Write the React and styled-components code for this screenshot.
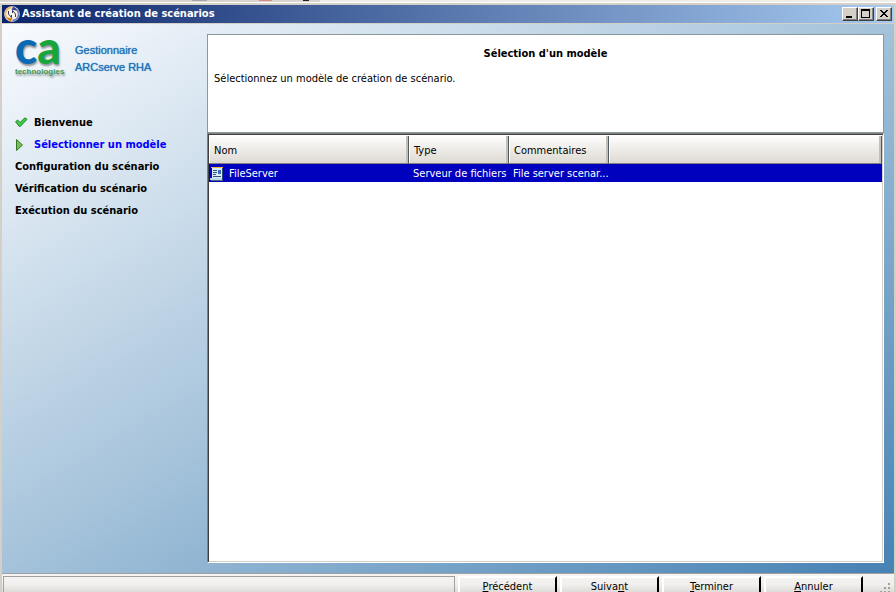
import React, { useState } from "react";
import styled, { createGlobalStyle } from "styled-components";

const steps = [
  { label: "Bienvenue", state: "done" },
  { label: "Sélectionner un modèle", state: "current" },
  { label: "Configuration du scénario", state: "todo" },
  { label: "Vérification du scénario", state: "todo" },
  { label: "Exécution du scénario", state: "todo" },
];

const models = [
  {
    name: "FileServer",
    type: "Serveur de fichiers",
    comment: "File server scenar...",
  },
];

export default function App() {
  const [selected, setSelected] = useState("FileServer");

  return (
    <>
      <GlobalStyle />
      <Page>
        <Backdrop />
        <Window>
          <TitleBar>
            <AppIcon />
            <Title>Assistant de création de scénarios</Title>
            <Caption>
              <CaptionButton type="button" aria-label="Réduire">
                <svg width="13" height="10" shapeRendering="crispEdges">
                  <rect x="2" y="7" width="6" height="2" />
                </svg>
              </CaptionButton>
              <CaptionButton type="button" aria-label="Agrandir">
                <svg width="13" height="10" shapeRendering="crispEdges">
                  <path d="M1 0h9v9h-9z M2 2v6h7v-6z" fillRule="evenodd" />
                </svg>
              </CaptionButton>
              <CaptionButton type="button" aria-label="Fermer" $apart>
                <svg width="13" height="10" shapeRendering="crispEdges">
                  <path d="M2 1h2v1h1v1h2v-1h1v-1h2v1h-1v1h-1v1h-1v1h1v1h1v1h1v1h-2v-1h-1v-1h-2v1h-1v1h-2v-1h1v-1h1v-1h1v-1h-1v-1h-1v-1h-1z" />
                </svg>
              </CaptionButton>
            </Caption>
          </TitleBar>
          <Body>
            <Sidebar>
              <Brand>
                <Logo>
                  <LogoName>
                    <LogoBlue>c</LogoBlue>a
                  </LogoName>
                  <LogoTag>technologies</LogoTag>
                </Logo>
                <Product>
                  Gestionnaire
                  <br />
                  ARCserve RHA
                </Product>
              </Brand>
              <StepList>
                {steps.map(step => (
                  <Step key={step.label} $current={step.state === "current"}>
                    {step.state === "done" && <CheckIcon />}
                    {step.state === "current" && <ArrowIcon />}
                    {step.label}
                  </Step>
                ))}
              </StepList>
            </Sidebar>
            <Main>
              <Intro>
                <Heading>Sélection d'un modèle</Heading>
                <p>Sélectionnez un modèle de création de scénario.</p>
              </Intro>
              <ListBox>
                <Table>
                  <thead>
                    <tr>
                      <HeadCell $width="200px">Nom</HeadCell>
                      <HeadCell $width="100px">Type</HeadCell>
                      <HeadCell $width="100px">Commentaires</HeadCell>
                      <HeadCell aria-label="Vide" />
                    </tr>
                  </thead>
                  <tbody>
                    {models.map(item => (
                      <Row
                        key={item.name}
                        $selected={item.name === selected}
                        onClick={() => setSelected(item.name)}
                      >
                        <Cell $first>
                          <NameBox>
                            <ServerIcon />
                            {item.name}
                          </NameBox>
                        </Cell>
                        <Cell>{item.type}</Cell>
                        <Cell>{item.comment}</Cell>
                        <Cell />
                      </Row>
                    ))}
                  </tbody>
                </Table>
              </ListBox>
            </Main>
          </Body>
          <Footer>
            <StatusBox />
            <FooterButton type="button">
              <u>P</u>récédent
            </FooterButton>
            <FooterButton type="button">
              Suiva<u>n</u>t
            </FooterButton>
            <FooterButton type="button">
              <u>T</u>erminer
            </FooterButton>
            <FooterButton type="button">
              <u>A</u>nnuler
            </FooterButton>
            <GripBox>
              <Grip />
            </GripBox>
          </Footer>
        </Window>
      </Page>
    </>
  );
}

// two arrows chasing each other round a disc
function AppIcon() {
  return (
    <svg width="16" height="16" viewBox="0 0 16 16" aria-hidden="true">
      <circle cx="8" cy="8" r="7.8" fill="#f6f3ee" />
      <path d="M7.500 1.500A6.500 6.500 0 0 0 3 12.200" fill="none" stroke="#f0b66a" strokeWidth="1.800" />
      <path d="M2.500 11.500l6 .5-1.500 3.500C5 15 3.500 13.500 2.500 11.500z" fill="#d98318" />
      <path d="M8.500 14.500A6.500 6.500 0 0 0 13 3.800" fill="none" stroke="#6f7fc0" strokeWidth="1.800" />
      <path d="M13.500 4.500l-6-.5L9 .8c2 .3 3.500 1.700 4.500 3.700z" fill="#39478f" />
      <path d="M4.500 5v3l3 3.500V9M11.500 11V8l-3-3.500V7" fill="none" stroke="#3a3a5a" />
    </svg>
  );
}

function CheckIcon() {
  return (
    <svg width="19" height="12" viewBox="0 0 19 12" aria-hidden="true">
      <path d="M.6 4.800l2-1.800 2.400 2.500L10 .8l2 1.600-7.300 7.500z" fill="#3fd03f" stroke="#1d7f28" />
    </svg>
  );
}

function ArrowIcon() {
  return (
    <svg width="19" height="12" viewBox="0 0 19 12" aria-hidden="true">
      <path d="M1.500 .5v11l6-5.500z" fill="#7cbc58" stroke="#2f7a22" />
    </svg>
  );
}

function ServerIcon() {
  return (
    <svg width="14" height="16" viewBox="0 0 14 16" shapeRendering="crispEdges" aria-hidden="true">
      <rect x="2" y="1" width="11" height="13" fill="#2c4a78" />
      <rect x="2" y="2" width="10" height="10" fill="#d8ecfa" />
      <rect x="1" y="1" width="12" height="1" fill="#f2b840" />
      <path d="M3 4h4v1h-4z M3 6h4v1h-4z M3 8h3v1h-3z M3 10h8v1h-8z" fill="#35507a" />
      <rect x="8" y="4" width="3" height="4" fill="#3d6cb8" />
      <rect x="0" y="12" width="12" height="2" fill="#b9d8ee" />
      <rect x="1" y="14" width="12" height="1" fill="#4b6480" />
    </svg>
  );
}

function Grip() {
  const dots = [[8, 0], [4, 4], [8, 4], [0, 8], [4, 8], [8, 8]];
  return (
    <svg width="11" height="11" shapeRendering="crispEdges" aria-hidden="true">
      {dots.map(([x, y]) => (
        <rect key={`${x}-${y}`} x={x} y={y} width="2" height="2" fill="#a0a0a0" />
      ))}
    </svg>
  );
}

const GlobalStyle = createGlobalStyle`
  * {
    box-sizing: border-box;
  }
  body {
    margin: 0;
    font-family: "DejaVu Sans Condensed", "DejaVu Sans", sans-serif;
    font-size: 11px;
    line-height: 14px;
    color: #000;
  }
  p, h1, h2, ol {
    margin: 0;
    padding: 0;
  }
`;

const Page = styled.div`
  height: 100vh;
  display: flex;
  flex-direction: column;
  overflow: hidden;
  background: #d4d0c8;
`;

// bottom edge of the window that lies behind
const Backdrop = styled.div`
  height: 3px;
  background:
    linear-gradient(#a8a8a8, #a8a8a8) 192px 0 / 15px 1px no-repeat,
    linear-gradient(#d98c80, #d98c80) 259px 0 / 13px 1px no-repeat,
    linear-gradient(#202020, #202020) 303px 0 / 6px 1px no-repeat,
    linear-gradient(to right, #d8d5d0 320px, #efedea 320px);
  border-bottom: 1px solid #fff;
`;

const Window = styled.div`
  flex: 1;
  min-height: 0;
  display: flex;
  flex-direction: column;
  border: 2px solid #d4d0c8;
  border-bottom: 0;
`;

const TitleBar = styled.header`
  display: flex;
  align-items: center;
  gap: 2px;
  height: 18px;
  padding: 0 2px;
  background: linear-gradient(to right, #0a246a, #a6caf0);
`;

const Title = styled.h1`
  flex: 1;
  font-size: 11px;
  font-weight: bold;
  color: #fff;
`;

const Caption = styled.div`
  display: flex;
`;

const CaptionButton = styled.button`
  width: 16px;
  height: 14px;
  margin-left: ${props => (props.$apart ? "2px" : "0")};
  padding: 1px;
  display: flex;
  background: #d4d0c8;
  border: 1px solid;
  border-color: #fff #404040 #404040 #fff;
  box-shadow: inset -1px -1px #808080;
`;

const Body = styled.div`
  flex: 1;
  min-height: 0;
  display: flex;
  margin-top: 1px;
  padding: 10px 10px 10px 0;
  background: linear-gradient(to bottom right, #f9fbfe, #a4c2da 50%, #4682b4);
`;

const Sidebar = styled.nav`
  width: 205px;
  flex-shrink: 0;
  padding-left: 13px;
`;

const Brand = styled.div`
  display: flex;
  gap: 8px;
  height: 78px;
`;

const Logo = styled.div`
  width: 52px;
  text-shadow: 1px 2px 2px #8b9199;
`;

const LogoName = styled.div`
  height: 33px;
  font-family: Lato, sans-serif;
  font-size: 46px;
  font-weight: 900;
  line-height: 26px;
  color: #18a53c;
`;

const LogoBlue = styled.span`
  color: #0a6ab4;
`;

const LogoTag = styled.div`
  font-family: "Liberation Sans", Arial, sans-serif;
  font-size: 8px;
  font-weight: bold;
  line-height: 10px;
  color: #3f9a55;
`;

const Product = styled.div`
  padding-top: 8px;
  font-family: "Liberation Sans", Arial, sans-serif;
  font-size: 11px;
  line-height: 17px;
  color: #1f73b7;
  text-shadow: 0 0 1px #1f73b7;
`;

const StepList = styled.ol`
  list-style: none;
`;

const Step = styled.li`
  display: flex;
  align-items: center;
  height: 22px;
  font-weight: bold;
  color: ${props => (props.$current ? "#0000ff" : "#000")};
`;

const Main = styled.main`
  flex: 1;
  min-width: 0;
  display: flex;
  flex-direction: column;
`;

const Intro = styled.section`
  height: 99px;
  padding: 12px 6px;
  background: #fff;
  border: 1px solid #8a9a9c;
`;

const Heading = styled.h2`
  margin-bottom: 11px;
  font-size: 11px;
  font-weight: bold;
  text-align: center;
`;

const ListBox = styled.div`
  flex: 1;
  background: #fff;
  border: 1px solid;
  border-color: #808080 #fff #fff #808080;
  box-shadow: inset 1px 1px #404040, inset -1px -1px #d4d0c8;
  padding: 2px 1px 1px 1px;
`;

const Table = styled.table`
  width: 100%;
  table-layout: fixed;
  border-collapse: separate;
  border-spacing: 0;
`;

const HeadCell = styled.th`
  width: ${props => props.$width || "auto"};
  height: 28px;
  padding: 2px 5px 0;
  text-align: left;
  font-weight: normal;
  background: linear-gradient(#fdfdfc, #dedad3);
  border-right: 1px solid #4f5b5f;
  border-bottom: 1px solid #808080;
  box-shadow: inset -2px 0 #c4c0b8, inset 1px 1px #fff;
`;

const Row = styled.tr`
  color: ${props => (props.$selected ? "#fff" : "#000")};
  background: ${props => (props.$selected ? "#0000bf" : "#fff")};
`;

const Cell = styled.td`
  height: 18px;
  padding: ${props => (props.$first ? "1px 1px 0" : "1px 0 0 4px")};
  overflow: hidden;
  text-overflow: ellipsis;
  white-space: nowrap;
`;

const NameBox = styled.div`
  display: flex;
  align-items: center;
  gap: 5px;
`;

const Footer = styled.footer`
  display: flex;
  align-items: flex-start;
  height: 19px;
  gap: 3px;
  padding-top: 2px;
  overflow: hidden;
  background: linear-gradient(#f6f5f4, #f0efed 60%, #dfddd8);
  border-top: 1px solid #a0a0a0;
`;

const StatusBox = styled.div`
  flex: 1;
  height: 24px;
  margin-left: 1px;
  border: 1px solid #a0a0a0;
`;

const FooterButton = styled.button`
  width: 99px;
  height: 24px;
  padding: 0 0 2px;
  font: inherit;
  color: #000;
  background: transparent;
  border: 2px solid;
  border-color: #fff #000 #000 #fff;
`;

const GripBox = styled.div`
  width: 28px;
  padding: 7px 0 0 14px;
`;
